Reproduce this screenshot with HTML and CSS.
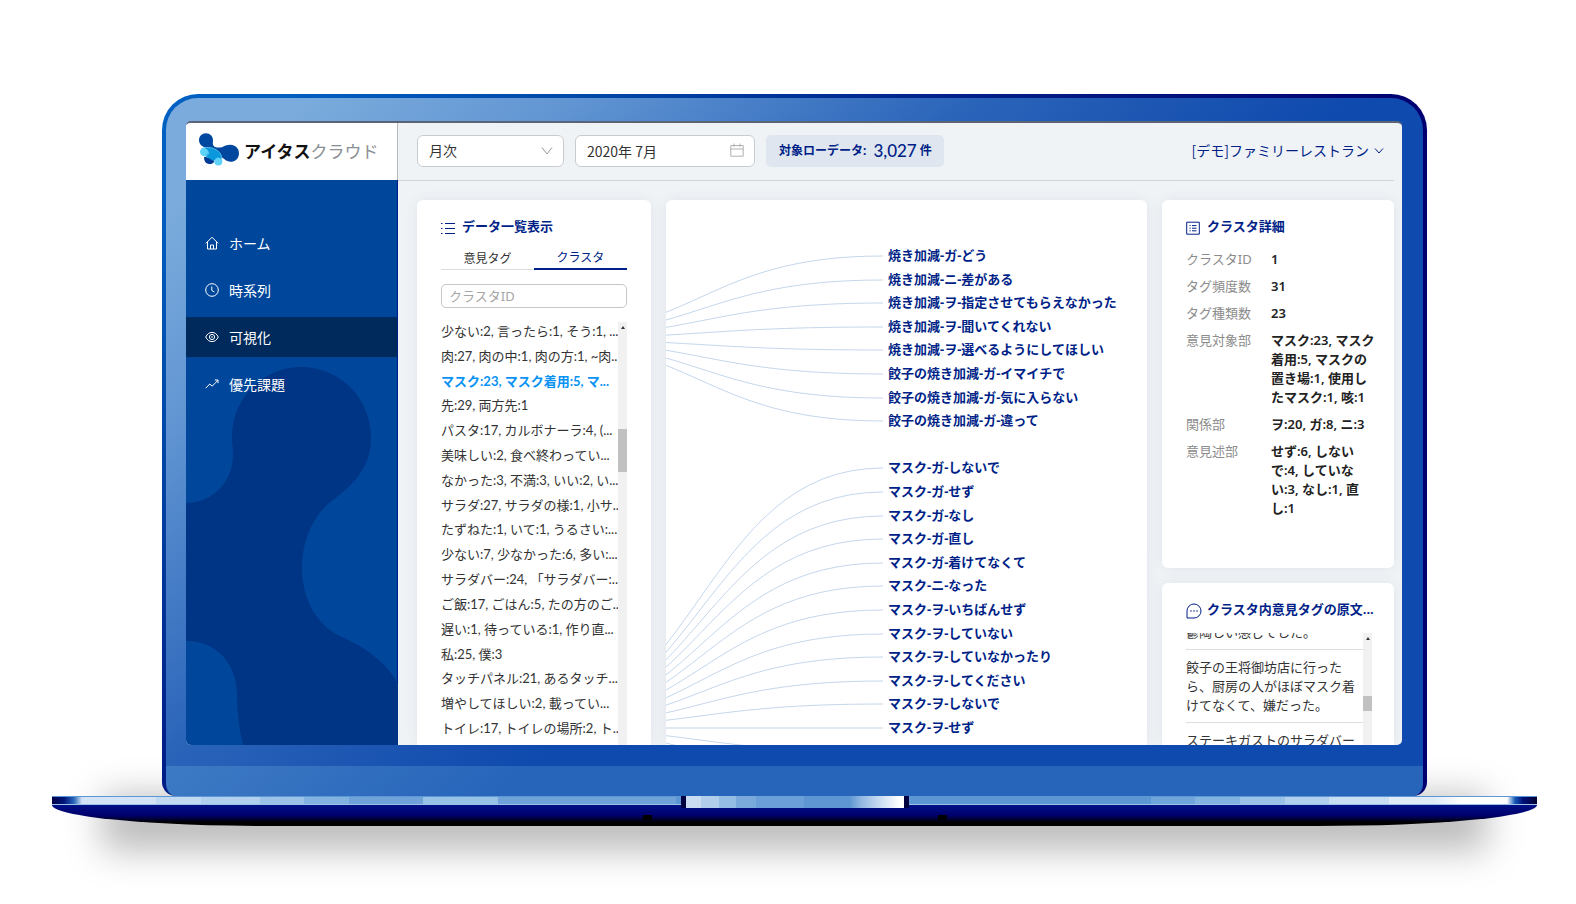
FILE: index.html
```
<!DOCTYPE html>
<html lang="ja">
<head>
<meta charset="utf-8">
<meta name="viewport" content="width=device-width, initial-scale=1">
<title>アイタスクラウド</title>
<link rel="stylesheet" href="styles.css">
</head>
<body>
<div class="laptop">
  <div class="lid">
    <div class="screen">
      <aside class="sidebar">
        <div class="logo">
          <svg class="logo-mark" viewBox="0 0 120 98" aria-hidden="true">
            <path fill="#00479f" d="M21 0C33 0 42 9 42 21C42 29 40 34 45 39C52 45 60 43 69 42C77 39 83 35 94 35C109 35 120 46 120 60C120 75 109 86 94 86C84 86 78 79 70 74C58 68 46 70 36 60C27 52 22 46 12 40C5 36 0 30 0 21C0 9 9 0 21 0Z"/>
            <path fill="#003c96" d="M15 72C20 70 46 78 46 85C42 92 33 94 27 92C19 90 15 82 15 72Z"/>
            <circle cx="16" cy="56" r="13" fill="#5ed2f7"/>
            <circle cx="58" cy="85" r="12" fill="#5ed2f7"/>
            <path fill="#0a97dc" d="M13 44C27 41 41 43 52 50C63 57 69 66 68 78C60 73 53 72 48 80C45 85 36 79 25 73C17 69 20 67 26 62C30 55 26 46 13 44Z"/>
            <path fill="none" stroke="#7fdcfa" stroke-width="2" d="M13 44C27 41 41 43 52 50C63 57 69 66 68 78M16 69C22 70 30 65 29 55"/>
          </svg>
          <span class="logo-text">アイタス<span class="logo-sub">クラウド</span></span>
        </div>
        <nav class="nav">
          <svg class="blob" viewBox="0 0 212 378" aria-hidden="true">
            <path fill="#003484" d="M0 136C26 136 47 115 47 88C47 80 46 78 46 70C46 31 77 0 115 0C154 0 185 31 185 71C185 95 173 113 151 130C128 145 116 172 116 201C116 235 134 262 158 271C185 283 203 300 212 317V378H57C53 360 51 345 51 328C51 300 34 274 0 274Z"/>
          </svg>
          <a class="nav-item" href="#home">
            <svg class="icon" viewBox="0 0 14 14"><path d="M.8 7.4L7 1.2l6.200 6.200M2.500 6v7h9V6M5.500 13V9h3v4"/></svg>ホーム</a>
          <a class="nav-item" href="#series">
            <svg class="icon" viewBox="0 0 14 14"><circle cx="7" cy="7" r="6.300"/><path d="M6.800 3.500v4l2.600 1.500"/></svg>時系列</a>
          <a class="nav-item active" href="#visual">
            <svg class="icon" viewBox="0 0 14 14"><path d="M.7 7C2.200 4 4.300 2.400 7 2.400S11.800 4 13.300 7C11.800 10 9.700 11.600 7 11.600S2.200 10 .7 7Z"/><circle cx="7" cy="7" r="2.600"/><circle cx="7" cy="7" r=".4"/></svg>可視化</a>
          <a class="nav-item" href="#issues">
            <svg class="icon" viewBox="0 0 14 14"><path d="M.7 11.200L4.800 7l2.400 2.200L13 3.200M9.800 3H13v3.200"/></svg>優先課題</a>
        </nav>
      </aside>

      <main class="main">
        <header class="header">
          <div class="select-wrap">
            <select class="field" aria-label="集計単位"><option>月次</option></select>
            <svg class="chevron" viewBox="0 0 12 12"><path d="M1 2.500l5 6.500 5-6.500"/></svg>
          </div>
          <div class="date-wrap">
            <input class="field" type="text" value="2020年 7月" aria-label="対象月">
            <svg class="calendar" viewBox="0 0 14 14"><path d="M.8 2.500h12.400v10.700H.8zM.8 6h12.400M4 .5v3.300M10 .5v3.300"/></svg>
          </div>
          <div class="badge">対象ローデータ:<span class="badge-num">3,027</span>件</div>
          <button class="account" type="button">[デモ]ファミリーレストラン
            <svg class="account-chevron" viewBox="0 0 10 10"><path d="M1 2.500l4 4.500 4-4.500"/></svg>
          </button>
        </header>

        <div class="content">
          <section class="card list-card">
            <h2 class="title">
              <svg class="title-icon" viewBox="0 0 14 14"><path d="M4 2.500h10M4 7.500h10M4 12.500h10M0 2.500h1.500M0 7.500h1.500M0 12.500h1.500"/></svg>データ一覧表示</h2>
            <div class="tabs">
              <button class="tab" type="button">意見タグ</button>
              <button class="tab current" type="button">クラスタ</button>
            </div>
            <input class="search" type="text" placeholder="クラスタID" aria-label="クラスタID">
            <div class="scroller">
              <ul class="rows">
                <li>少ない:2, 言ったら:1, そう:1, ...</li>
                <li>肉:27, 肉の中:1, 肉の方:1, ~肉...</li>
                <li class="selected">マスク:23, マスク着用:5, マ...</li>
                <li>先:29, 両方先:1</li>
                <li>パスタ:17, カルボナーラ:4, (...</li>
                <li>美味しい:2, 食べ終わってい...</li>
                <li>なかった:3, 不満:3, いい:2, い...</li>
                <li>サラダ:27, サラダの様:1, 小サ...</li>
                <li>たずねた:1, いて:1, うるさい:...</li>
                <li>少ない:7, 少なかった:6, 多い:...</li>
                <li>サラダバー:24, 「サラダバー:...</li>
                <li>ご飯:17, ごはん:5, たの方のご...</li>
                <li>遅い:1, 待っている:1, 作り直...</li>
                <li>私:25, 僕:3</li>
                <li>タッチパネル:21, あるタッチ...</li>
                <li>増やしてほしい:2, 載ってい...</li>
                <li>トイレ:17, トイレの場所:2, ト...</li>
              </ul>
              <div class="bar list-bar"><span class="bar-arrow"></span><span class="bar-thumb"></span></div>
            </div>
          </section>

          <section class="card tree-card">
            <svg class="tree" width="481" height="560" viewBox="0 1 481 560" aria-label="クラスタツリー">
              <g class="links">
                <path d="M-149 140C34 140 34 57 217 57"/>
                <path d="M-149 140C34 140 34 81 217 81"/>
                <path d="M-149 140C34 140 34 104 217 104"/>
                <path d="M-149 140C34 140 34 128 217 128"/>
                <path d="M-149 140C34 140 34 151 217 151"/>
                <path d="M-149 140C34 140 34 175 217 175"/>
                <path d="M-149 140C34 140 34 199 217 199"/>
                <path d="M-149 140C34 140 34 222 217 222"/>
                <path d="M-149 529C34 529 34 269 217 269"/>
                <path d="M-149 529C34 529 34 293 217 293"/>
                <path d="M-149 529C34 529 34 317 217 317"/>
                <path d="M-149 529C34 529 34 340 217 340"/>
                <path d="M-149 529C34 529 34 364 217 364"/>
                <path d="M-149 529C34 529 34 387 217 387"/>
                <path d="M-149 529C34 529 34 411 217 411"/>
                <path d="M-149 529C34 529 34 435 217 435"/>
                <path d="M-149 529C34 529 34 458 217 458"/>
                <path d="M-149 529C34 529 34 482 217 482"/>
                <path d="M-149 529C34 529 34 505 217 505"/>
                <path d="M-149 529C34 529 34 529 217 529"/>
                <path d="M-149 529C34 529 34 553 217 553"/>
                <path d="M-149 529C34 529 34 576 217 576"/>
              </g>
              <g class="leaves">
                <text x="222" y="61">焼き加減-ガ-どう</text>
                <text x="222" y="85">焼き加減-ニ-差がある</text>
                <text x="222" y="108">焼き加減-ヲ-指定させてもらえなかった</text>
                <text x="222" y="132">焼き加減-ヲ-聞いてくれない</text>
                <text x="222" y="155">焼き加減-ヲ-選べるようにしてほしい</text>
                <text x="222" y="179">餃子の焼き加減-ガ-イマイチで</text>
                <text x="222" y="203">餃子の焼き加減-ガ-気に入らない</text>
                <text x="222" y="226">餃子の焼き加減-ガ-違って</text>
                <text x="222" y="273">マスク-ガ-しないで</text>
                <text x="222" y="297">マスク-ガ-せず</text>
                <text x="222" y="321">マスク-ガ-なし</text>
                <text x="222" y="344">マスク-ガ-直し</text>
                <text x="222" y="368">マスク-ガ-着けてなくて</text>
                <text x="222" y="391">マスク-ニ-なった</text>
                <text x="222" y="415">マスク-ヲ-いちばんせず</text>
                <text x="222" y="439">マスク-ヲ-していない</text>
                <text x="222" y="462">マスク-ヲ-していなかったり</text>
                <text x="222" y="486">マスク-ヲ-してください</text>
                <text x="222" y="509">マスク-ヲ-しないで</text>
                <text x="222" y="533">マスク-ヲ-せず</text>
              </g>
            </svg>
          </section>

          <div class="side">
            <section class="card detail-card">
              <h2 class="title">
                <svg class="title-icon" viewBox="0 0 14 14"><path d="M.7 1.200h12.600v12H.7zM3.500 4.600h1.200M3.500 7.200h1.200M3.500 9.800h1.200M6 4.600h4.500M6 7.200h4.500M6 9.800h4.500"/></svg>クラスタ詳細</h2>
              <dl class="details">
                <dt>クラスタID</dt><dd>1</dd>
                <dt>タグ頻度数</dt><dd>31</dd>
                <dt>タグ種類数</dt><dd>23</dd>
                <dt>意見対象部</dt><dd>マスク:23, マスク<br>着用:5, マスクの<br>置き場:1, 使用し<br>たマスク:1, 咳:1</dd>
                <dt>関係部</dt><dd>ヲ:20, ガ:8, ニ:3</dd>
                <dt>意見述部</dt><dd>せず:6, しない<br>で:4, していな<br>い:3, なし:1, 直<br>し:1</dd>
              </dl>
            </section>
            <section class="card source-card">
              <h2 class="title">
                <svg class="title-icon" viewBox="0 0 16 16"><path d="M1 15V8a7 7 0 1 1 7 7ZM4.200 8h1.600M7.200 8h1.600M10.200 8h1.600"/></svg>クラスタ内意見タグの原文...</h2>
              <div class="source-scroller">
                <div class="posts">
                  <p class="post first">鬱陶しい感じでした。</p>
                  <p class="post">餃子の王将御坊店に行った<br>ら、厨房の人がほぼマスク着<br>けてなくて、嫌だった。</p>
                  <p class="post">ステーキガストのサラダバー</p>
                </div>
                <div class="bar source-bar"><span class="bar-arrow"></span><span class="bar-thumb"></span></div>
              </div>
            </section>
          </div>
        </div>
      </main>
    </div>
    <div class="chin"></div>
  </div>
  <div class="base">
    <div class="shadow"></div>
    <div class="deck"></div>
    <div class="body">
      <span class="foot"></span>
      <span class="foot"></span>
    </div>
    <div class="notch"></div>
  </div>
</div>
</body>
</html>
```
FILE: styles.css
```
* {
  box-sizing: border-box;
}

body {
  margin: 0;
  height: 100vh;
  overflow: hidden;
  background: #fff;
  color: #333;
  font: 13px/19px "Noto Sans", "Noto Sans CJK JP", sans-serif;
}

h2, ul, dl, dd, p {
  margin: 0;
  padding: 0;
}

button, input, select {
  font: inherit;
}

svg {
  fill: none;
  stroke-linejoin: round;
}

.laptop {
  padding: 94px 39px 0 52px;
}

/* Lid */

.lid {
  position: relative;
  z-index: 1;
  margin: 0 110px;
  padding: 23px 21px 0 20px;
  border: 4px solid transparent;
  border-bottom: 0;
  border-radius: 36px 36px 14px 14px;
  background:
    linear-gradient(141deg, #7aabdc 7%, #6296d3 19%, #2b65ba 38%, #1f58b3 46%, #0f4aae 56%) padding-box,
    linear-gradient(141deg, #0060c2 5%, #0048a8 20%, #001f88 38%, #000070 60%) border-box;
}

.screen {
  display: flex;
  height: calc(100vh - 280px);
  overflow: hidden;
  border-top: 2px solid #5b6475;
  border-radius: 5px;
  background: #f0f3f6;
}

.chin {
  height: 30px;
  margin: 21px -21px 0 -20px;
  border-radius: 0 0 10px 10px;
  background: rgba(160, 240, 255, 0.17);
}

/* Sidebar */

.sidebar {
  display: flex;
  flex: none;
  flex-direction: column;
  width: 212px;
}

.logo {
  display: flex;
  align-items: center;
  height: 57px;
  padding: 0 13px 4px;
  border-right: 1px solid #b9b9b9;
  background: #fff;
}

.logo-mark {
  width: 40px;
  height: 33px;
  margin-right: 5px;
}

.logo-text {
  padding-top: 3px;
  color: #111;
  font-size: 17px;
  font-weight: 700;
  white-space: nowrap;
}

.logo-sub {
  color: #8a8f94;
  font-weight: 400;
}

.nav {
  position: relative;
  display: flex;
  flex: 1;
  flex-direction: column;
  gap: 7px;
  padding-top: 43px;
  border-right: 1px solid #001c8c;
  background: #00479b;
}

.blob {
  position: absolute;
  bottom: 0;
  left: 0;
  width: 212px;
  height: 378px;
}

.nav-item {
  position: relative;
  display: flex;
  align-items: center;
  gap: 10px;
  height: 40px;
  padding-left: 19px;
  color: #fff;
  font-size: 14px;
  text-decoration: none;
}

.nav-item.active {
  background: #002a5c;
}

.icon {
  width: 14px;
  height: 14px;
  stroke: #fff;
}

/* Header */

.main {
  flex: 1;
  min-width: 0;
  padding: 0 8px 0 19px;
}

.header {
  display: flex;
  align-items: center;
  gap: 11px;
  height: 58px;
  margin-left: -19px;
  padding: 0 10px 2px 19px;
  border-bottom: 1px solid #d0d4d9;
}

.select-wrap, .date-wrap {
  position: relative;
  width: 147px;
}

.date-wrap {
  width: 180px;
}

.field {
  display: block;
  width: 100%;
  height: 32px;
  padding: 0 11px;
  border: 1px solid #c9cccf;
  border-radius: 6px;
  background: #fff;
  color: #333;
  font-family: "Noto Sans CJK JP", sans-serif;
  font-size: 14px;
  appearance: none;
}

.chevron, .calendar {
  position: absolute;
  top: 10px;
  right: 11px;
  width: 12px;
  height: 12px;
  stroke: #999;
}

.calendar {
  top: 8px;
  width: 14px;
  height: 14px;
  stroke: #b0b0b0;
}

.badge {
  display: flex;
  align-items: center;
  height: 32px;
  padding: 0 12px 0 13px;
  border-radius: 5px;
  background: #dfe6f0;
  color: #001f87;
  font-size: 12px;
  font-weight: 700;
}

.badge-num {
  margin: 0 3px 0 7px;
  font: 500 17px/20px Lato, sans-serif;
}

.account {
  display: flex;
  align-items: center;
  gap: 5px;
  margin-left: auto;
  padding: 0;
  border: 0;
  background: none;
  color: #001f87;
  font-family: "Noto Sans CJK JP", sans-serif;
  font-size: 14px;
}

.account-chevron {
  width: 10px;
  height: 10px;
  stroke: #001f87;
}

/* Cards */

.content {
  display: grid;
  grid-template-columns: 234px minmax(0, 1fr) 232px;
  gap: 15px;
  height: calc(100% - 58px);
  padding-top: 19px;
}

.card {
  overflow: hidden;
  border-radius: 6px 6px 0 0;
  background: #fff;
  box-shadow: 0 0 14px rgba(30, 60, 80, 0.07);
}

.title {
  display: flex;
  align-items: center;
  gap: 7px;
  height: 18px;
  color: #001f87;
  font-size: 13px;
  font-weight: 700;
  white-space: nowrap;
}

.title-icon {
  flex: none;
  width: 14px;
  height: 14px;
  margin-top: 3px;
  stroke: #001f87;
}

.list-card {
  display: flex;
  flex-direction: column;
  padding: 17px 24px 0;
}

.tabs {
  display: grid;
  grid-template-columns: 1fr 1fr;
  margin-top: 12px;
}

.tab {
  height: 23px;
  padding: 0;
  border: 0;
  border-bottom: 1px solid #ddd;
  background: none;
  color: #333;
  font-size: 12px;
}

.tab.current {
  border-bottom: 2px solid #001f87;
  color: #001f87;
}

.search {
  width: 100%;
  height: 24px;
  margin-top: 14px;
  padding: 0 7px;
  border: 1px solid #c4c7ca;
  border-radius: 5px;
  background: #fff;
}

.search::placeholder {
  color: #a5a5a5;
}

.scroller {
  display: flex;
  flex: 1;
  min-height: 0;
  margin-top: 11px;
}

.rows {
  display: grid;
  flex: 1;
  grid-auto-rows: 1fr;
  align-items: center;
  height: 422px;
  min-width: 0;
  font-family: Lato, "Noto Sans CJK JP", sans-serif;
  list-style: none;
  white-space: nowrap;
}

.selected {
  color: #0a93f5;
  font-weight: 700;
}

.bar {
  display: flex;
  flex: none;
  flex-direction: column;
  align-items: center;
  width: 9px;
  background: #f1f1f1;
}

.bar-arrow {
  margin-top: 4px;
  border: 2px solid transparent;
  border-top: 0;
  border-bottom: 3px solid #333;
}

.bar-thumb {
  width: 100%;
  background: #c1c1c1;
}

.list-bar {
  margin-top: 3px;
}

.list-bar .bar-thumb {
  height: 43px;
  margin-top: 100px;
}

/* Tree */

.tree {
  display: block;
}

.links {
  stroke: #c5d7eb;
}

.leaves {
  fill: #001f87;
  font-weight: 700;
}

/* Right column */

.side {
  display: flex;
  flex-direction: column;
  gap: 15px;
  min-height: 0;
}

.detail-card {
  flex: none;
  height: 368px;
  padding: 17px 20px 0 24px;
  border-radius: 6px;
}

.details {
  display: grid;
  grid-template-columns: 77px 1fr;
  gap: 8px;
  margin-top: 15px;
  white-space: nowrap;
}

.details dt {
  color: #8c8c8c;
}

.details dd {
  color: #222;
  font-weight: 600;
}

.source-card {
  display: flex;
  flex: 1;
  flex-direction: column;
  min-height: 0;
  padding: 17px 22px 0 24px;
}

.source-card .title-icon {
  width: 16px;
  height: 16px;
}

.source-card .title {
  gap: 5px;
}

.source-scroller {
  display: flex;
  flex: 1;
  min-height: 0;
  margin-top: 15px;
  overflow: hidden;
}

.posts {
  flex: 1;
  min-width: 0;
  white-space: nowrap;
}

.post {
  padding: 8px 0 7px;
  border-bottom: 1px solid #ddd;
}

.post.first {
  margin-top: -10px;
  padding-top: 0;
}

.source-bar .bar-thumb {
  height: 15px;
  margin-top: 56px;
}

/* Base */

.base {
  position: relative;
}

.shadow {
  position: absolute;
  top: 0;
  right: 50px;
  left: 50px;
  height: 54px;
  background: rgba(0, 0, 0, 0.27);
  filter: blur(18px);
}

.deck {
  position: relative;
  z-index: 2;
  height: 9px;
  border-top: 1px solid #5d97d5;
  border-bottom: 1px solid #9cc0e6;
  background:
    linear-gradient(90deg, #000046 0, #00157a 12px, #2a68ba 22px, transparent 30px),
    linear-gradient(270deg, #000030 0, #00107a 14px, #1458b4 22px, transparent 30px),
    linear-gradient(90deg, #d2e4f5 7%, #c2daf1 7% 10%, #b1d0ed 10% 14%, #9bc3e7 14% 17%, #82b2df 17% 20%, #6ea2d9 20% 25%, #96c2e8 25% 30%, #6ea2d9 30% 42%, #5d97d3 42% 74%, #6fa5da 74% 77%, #82b2df 77% 80%, #9bc3e7 80% 83%, #b1d0ed 83% 86%, #c8def2 86% 90%, #dfebf7 90% 93%, #fff 95%);
}

.body {
  position: relative;
  display: flex;
  justify-content: center;
  gap: 286px;
  height: 21px;
  padding-top: 10px;
  border-radius: 0 0 220px 220px / 0 0 21px 21px;
  background: linear-gradient(#001086 0, #00006c 50%, #000 82%);
}

.foot {
  width: 9px;
  height: 5px;
  background: #000;
}

.notch {
  position: absolute;
  z-index: 3;
  top: 0;
  right: 0;
  left: 0;
  width: 228px;
  height: 12px;
  margin: 0 auto;
  border: solid #000040;
  border-width: 0 5px;
  background: linear-gradient(90deg, #c9dcf2 7%, #b1cdec 7% 15%, #94bee4 15% 23%, #7aaadb 23% 32%, #6b9fd8 32% 54%, #5d96d2 54% 75%, #8fb5e0 80%, #c4d8f1 88%, #fff 98%);
}
```
